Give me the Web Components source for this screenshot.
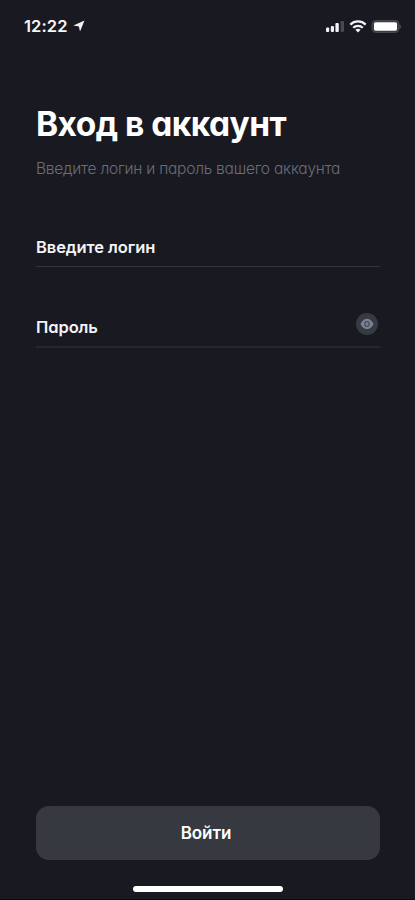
<!DOCTYPE html>
<html lang="ru">
<head>
<meta charset="utf-8">
<title>Вход в аккаунт</title>
<style>
html,body{margin:0;height:100%;background:#191a21}
body{font-family:Inter,"Liberation Sans",sans-serif;color:#fff;font-feature-settings:"cv11" 1}
</style>
</head>
<body>
<login-screen></login-screen>
<script>
const define = (name, html) => {
  const t = document.createElement('template');
  t.innerHTML = html;
  customElements.define(name, class extends HTMLElement {
    constructor() {
      super();
      this.attachShadow({mode: 'open'}).append(t.content.cloneNode(true));
    }
  });
};

define('status-bar', `
<style>
:host{display:flex;height:52px;box-sizing:border-box;padding:0 14px 0 24px;align-items:center;justify-content:space-between}
.time,.icons{display:flex;align-items:center}
.time{font-size:16.5px;font-weight:600;line-height:20px;gap:5px;letter-spacing:.1px;color:#f6f6f8}
svg{display:block}
</style>
<div class="time"><span>12:22</span>
<svg width="12" height="12" viewBox="0 0 12 12"><path d="M11.5.5 7 11.6 5.900 6.400.4 5.400z" fill="#f2f2f4"/></svg></div>
<div class="icons">
<svg width="76" height="16" viewBox="0 0 76 16">
<g fill="#f2f2f4"><rect x="1" y="9.5" width="3.2" height="4.5" rx="1"/><rect x="5.8" y="8" width="3.2" height="6" rx="1"/><rect x="10.4" y="5" width="3.4" height="9" rx="1"/></g>
<rect x="15.6" y="3" width="3.4" height="11" rx="1" fill="#484a4f"/>
<g fill="none" stroke="#f2f2f4" stroke-width="2.2"><path d="M25.3 6.6a11 11 0 0 1 15.4 0"/><path d="M28.2 9.7a7 7 0 0 1 9.6 0"/></g>
<path d="M30.4 11.8a4 4 0 0 1 5.2 0L33 14.4z" fill="#f2f2f4"/>
<rect x="47.1" y="2.6" width="26.8" height="11.8" rx="3.6" fill="#3a3b41" stroke="#4c4d52"/>
<rect x="49" y="4.3" width="23" height="8.4" rx="1.6" fill="#fff"/>
<path d="M74.6 6.2c1.6.8 1.6 4 0 4.800z" fill="#5b5c61"/>
</svg></div>`);

define('screen-heading', `
<style>
:host{display:block}
h1{margin:0;font-size:33.5px;line-height:41px;font-weight:700;white-space:nowrap;letter-spacing:-.55px}
p{margin:14px 0 0;font-size:15.5px;line-height:20px;font-weight:300;color:#6b6d77;white-space:nowrap;letter-spacing:-.23px}
</style>
<h1><slot name="title"></slot></h1><p><slot></slot></p>`);

define('form-field', `
<style>
:host{display:flex;align-items:flex-start;justify-content:space-between;box-sizing:border-box;height:32px;border-bottom:var(--line,1px solid #34353a)}
.label{font-size:16.5px;line-height:24px;font-weight:600;white-space:nowrap;color:#f4f4f6;letter-spacing:-.08px}
</style>
<span class="label"><slot></slot></span><slot name="action"></slot>`);

define('reveal-button', `
<style>
:host{display:block;width:22px;height:22px;margin:-2px 2px 0 0}
svg{display:block}
</style>
<svg width="22" height="22" viewBox="0 0 22 22"><circle cx="11" cy="11" r="11" fill="#363a42"/>
<path d="M4.500 11C6 7.800 8.500 5.800 11 5.800s5 2 6.500 5.200C16 14.200 13.500 16.200 11 16.200s-5-2-6.500-5.200z" fill="#7e8193"/>
<circle cx="11" cy="11" r="2.300" fill="#7e8193" stroke="#4a4e5b" stroke-width="1.300"/></svg>`);

define('primary-button', `
<style>
:host{display:block}
button{display:block;width:100%;height:54px;padding:0 4px 0 0;border:0;border-radius:13px;background:#363a40;color:#fff;font:600 17px/54px Inter,"Liberation Sans",sans-serif;font-feature-settings:inherit;letter-spacing:-.1px}
</style>
<button type="button"><slot></slot></button>`);

define('home-indicator', `
<style>:host{display:block;width:150px;height:6px;border-radius:3px;background:#fff}</style>`);

define('login-screen', `
<style>
:host{display:flex;flex-direction:column;height:900px;box-sizing:border-box;background:#191a21;padding-bottom:7px;border-bottom:1px solid #0c0912}
main{flex:1;display:flex;flex-direction:column;padding:52px 35px 0 36px}
.form{display:flex;flex-direction:column;gap:48px;margin-top:56px}
.password{--line:2px solid #26282d;height:33px}
primary-button{margin-top:auto}
home-indicator{align-self:center;margin-top:26px}
</style>
<status-bar></status-bar>
<main>
<screen-heading><span slot="title">Вход в аккаунт</span>Введите логин и пароль вашего аккаунта</screen-heading>
<div class="form">
<form-field>Введите логин</form-field>
<form-field class="password">Пароль<reveal-button slot="action"></reveal-button></form-field>
</div>
<primary-button>Войти</primary-button>
</main>
<home-indicator></home-indicator>`);
</script>
</body>
</html>
